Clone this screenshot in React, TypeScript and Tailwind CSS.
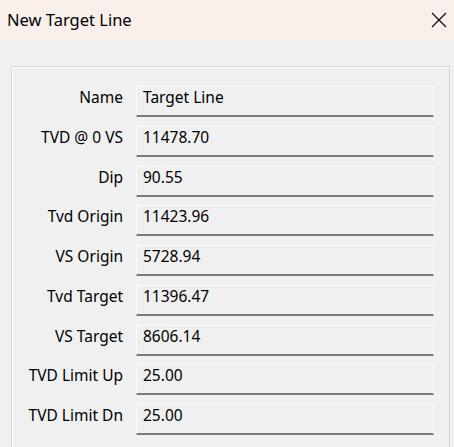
const rows: [string, string][] = [
  ['Name', 'Target Line'],
  ['TVD @ 0 VS', '11478.70'],
  ['Dip', '90.55'],
  ['Tvd Origin', '11423.96'],
  ['VS Origin', '5728.94'],
  ['Tvd Target', '11396.47'],
  ['VS Target', '8606.14'],
  ['TVD Limit Up', '25.00'],
  ['TVD Limit Dn', '25.00'],
];

export default function App() {
  return (
    <div
      className="w-[454px] h-[447px] overflow-hidden bg-[#f0f0f0] text-black"
      style={{ fontFamily: '"Noto Sans", "Open Sans", sans-serif' }}
    >
      {/* Title bar */}
      <div className="h-[40px] bg-[#f9f0ec] flex items-center justify-between pl-[7px] pr-[6px]">
        <span className="text-[16.5px] leading-none">New Target Line</span>
        <svg width="16" height="16" viewBox="0 0 16 16" className="mr-[1px]">
          <path d="M1 1 L15 15 M15 1 L1 15" stroke="#111" strokeWidth="1.3" fill="none" />
        </svg>
      </div>

      {/* Group box */}
      <div className="mt-[26px] ml-[11px] mr-[4px] border border-[#d9d9d9] shadow-[inset_1px_1px_0_#ffffff] h-[400px] pt-[19px] pl-[124px] pr-[15px]">
        <div className="flex flex-col gap-[8.75px]">
          {rows.map(([label, value]) => (
            <div key={label} className="relative h-[31px]">
              <span className="absolute right-[calc(100%+13px)] top-[1px] whitespace-nowrap text-[15.5px] leading-[20px]">
                {label}
              </span>
              <div className="h-full bg-[#f0f0f0] border-t border-l border-r border-[#fbfbfb] border-b-2 border-b-[#7a7a7a] pl-[6px] pt-0 text-[15.5px] leading-[20px]">
                {value}
              </div>
            </div>
          ))}
        </div>
      </div>
    </div>
  );
}
